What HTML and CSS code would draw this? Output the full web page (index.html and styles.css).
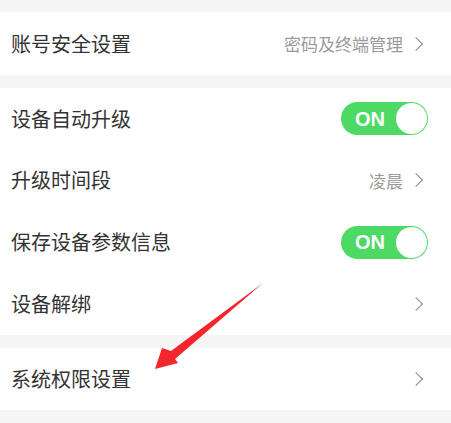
FILE: index.html
```html
<!DOCTYPE html>
<html>
<head>
<meta charset="utf-8">
<link rel="stylesheet" href="styles.css">
</head>
<body>
<div class="page">
  <div class="group g1">
    <div class="row"><span class="label">账号安全设置</span><span class="right"><span class="value">密码及终端管理</span><span class="chev"></span></span></div>
  </div>
  <div class="group g2">
    <div class="row"><span class="label">设备自动升级</span><span class="toggle"><span class="on">ON</span><span class="knob"></span></span></div>
    <div class="row"><span class="label">升级时间段</span><span class="right"><span class="value">凌晨</span><span class="chev"></span></span></div>
    <div class="row"><span class="label">保存设备参数信息</span><span class="toggle"><span class="on">ON</span><span class="knob"></span></span></div>
    <div class="row"><span class="label">设备解绑</span><span class="right"><span class="chev"></span></span></div>
  </div>
  <div class="group g3">
    <div class="row tall"><span class="label">系统权限设置</span><span class="right"><span class="chev"></span></span></div>
  </div>
  <svg class="arrow" width="451" height="423" viewBox="0 0 451 423">
    <polygon points="263,283 175,359 178,363 155,369 162,348 171,351" fill="#f2262c"/>
  </svg>
</div>
</body>
</html>
```
FILE: styles.css
```css
html, body {
  margin: 0;
  padding: 0;
  background: #f5f5f5;
}
.page {
  position: relative;
  width: 451px;
  height: 423px;
  padding-top: 12px;
  box-sizing: border-box;
  display: flex;
  flex-direction: column;
  gap: 13px;
  font-family: "Noto Sans CJK SC", "Noto Sans", sans-serif;
  overflow: hidden;
}
.group {
  background: #fff;
  display: flex;
  flex-direction: column;
}
.row {
  height: 63px;
  display: flex;
  align-items: center;
  justify-content: space-between;
  padding: 0 24px 0 11px;
}
.g2 .row {
  height: 62px;
}
.g2 .row:first-child { height: 61px; }
.tall { height: 62px; }
.label {
  font-size: 20px;
  color: #333;
  line-height: 1;
}
.right {
  display: flex;
  align-items: center;
  gap: 8px;
}
.value {
  font-size: 17px;
  color: #9a9a9a;
  line-height: 1;
}
.chev {
  width: 9px;
  height: 9px;
  border-top: 1.5px solid #8a8a8a;
  border-right: 1.5px solid #8a8a8a;
  transform: rotate(45deg);
  margin-right: 6px;
}
.toggle {
  width: 87px;
  height: 33px;
  box-sizing: border-box;
  background: #4cd964;
  border-radius: 17px;
  display: flex;
  align-items: center;
  justify-content: space-between;
  padding: 0 1px 0 14px;
  margin-right: -1px;
}
.on {
  color: #fff;
  font-family: "Liberation Sans", Arial, sans-serif;
  font-weight: bold;
  font-size: 20px;
  line-height: 1;
}
.knob {
  width: 31px;
  height: 31px;
  border-radius: 50%;
  background: #fff;
}
.arrow {
  position: absolute;
  left: 0;
  top: 0;
}
```
